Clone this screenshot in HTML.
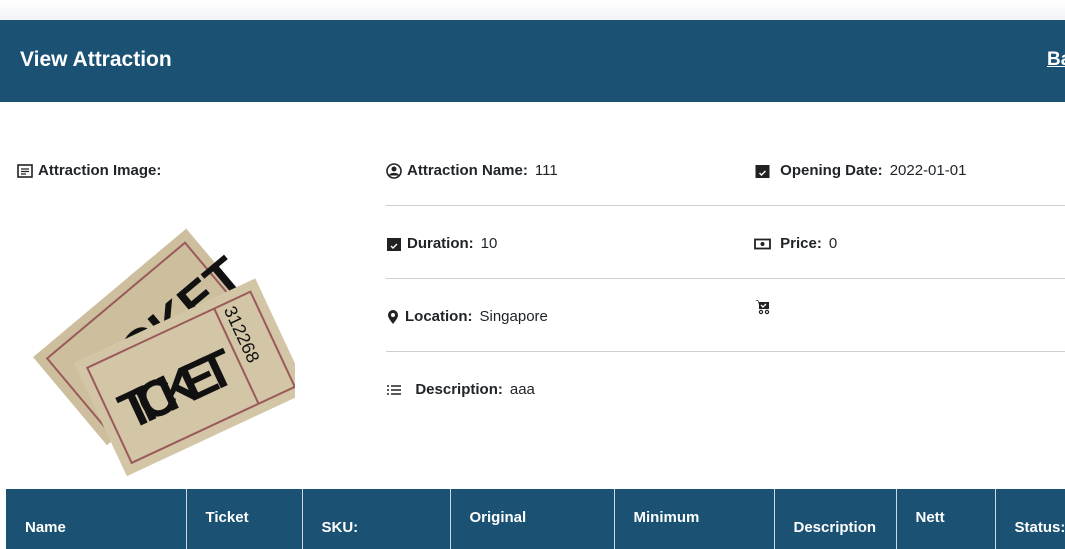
<!DOCTYPE html>
<html><head><meta charset="utf-8"><style>
body{margin:0;width:1065px;height:529px;overflow:hidden;background:#fff;font-family:"Liberation Sans",sans-serif;color:#212529;position:relative}
.top{position:absolute;left:0;top:0;width:1065px;height:20px;background:linear-gradient(#fff,#f1f3f6)}
.bar{position:absolute;left:0;top:20px;width:1065px;height:82px;background:#1b5274}
.bar h1{position:absolute;left:20px;top:28px;margin:0;font-size:21px;font-weight:bold;color:#fff}
.bar a{position:absolute;left:1047px;top:29px;color:#fff;font-size:19px;font-weight:bold;text-decoration:underline}
.f{position:absolute;font-size:15px;white-space:nowrap;display:flex;align-items:center}
.f b{margin-right:7px}
.f svg{margin-right:5px}
.hr{position:absolute;left:386px;width:679px;height:1px;background:#cfcfcf}
table{position:absolute;left:6px;top:489px;border-collapse:collapse;table-layout:fixed;background:#1b5274;color:#fff;font-weight:bold;font-size:15px;width:1100px}
td{border-left:1px solid #cfd8e0;height:60px;vertical-align:top;padding:0 0 0 19px;box-sizing:border-box;overflow:hidden;white-space:nowrap}
</style></head><body>
<div class="top"></div>
<div class="bar"><h1>View Attraction</h1><a>Ba</a></div>

<div class="f" style="left:17px;top:162px"><svg width="16" height="14" viewBox="0 0 16 14"><rect x="1" y="1" width="14" height="12" fill="none" stroke="#222" stroke-width="1.6"/><path d="M4 5h8M4 7.5h8M4 10h5" stroke="#222" stroke-width="1.3"/></svg><b>Attraction Image:</b></div>

<svg style="position:absolute;left:30px;top:195px" width="265" height="285" viewBox="0 0 265 285">
<g transform="rotate(-40 115 140)"><rect x="15" y="85" width="200" height="115" fill="#cdbf9e"/><rect x="25" y="95" width="180" height="95" fill="none" stroke="#9a5a5a" stroke-width="2"/><text x="40" y="165" font-size="52" font-weight="bold" fill="#111" font-family="Liberation Sans Narrow,Liberation Sans,sans-serif">TICKET</text></g>
<g transform="rotate(-25 160 180)"><rect x="60" y="120" width="200" height="125" fill="#d3c6a6"/><rect x="70" y="130" width="180" height="105" fill="none" stroke="#9a5a5a" stroke-width="2"/><line x1="210" y1="130" x2="210" y2="235" stroke="#9a5a5a" stroke-width="2"/><text x="82" y="205" font-size="52" font-weight="bold" fill="#111" font-family="Liberation Sans Narrow,Liberation Sans,sans-serif" textLength="120">TICKET</text><text x="0" y="0" font-size="18" fill="#111" transform="translate(218 135) rotate(90)">312268</text></g>
</svg>

<div class="f" style="left:386px;top:162px"><svg width="16" height="16" viewBox="0 0 16 16"><circle cx="8" cy="8" r="7" fill="none" stroke="#222" stroke-width="1.6"/><circle cx="8" cy="6" r="2.5" fill="#222"/><path d="M3.5 12.5c1.5-2.5 7.5-2.5 9 0" fill="#222" stroke="#222" stroke-width="1.5"/></svg><b>Attraction Name:</b>111</div>
<div class="f" style="left:754px;top:162px"><svg width="17" height="16" viewBox="0 0 16 16"><rect x="1" y="2" width="14" height="13" fill="#222"/><path d="M5 10l2 2 4-4" stroke="#fff" stroke-width="1.4" fill="none"/></svg>&nbsp;<b>Opening Date:</b>2022-01-01</div>
<div class="hr" style="top:205px"></div>
<div class="f" style="left:386px;top:235px"><svg width="16" height="16" viewBox="0 0 16 16"><rect x="1" y="2" width="14" height="13" fill="#222"/><path d="M5 10l2 2 4-4" stroke="#fff" stroke-width="1.4" fill="none"/></svg><b>Duration:</b>10</div>
<div class="f" style="left:754px;top:235px"><svg width="17" height="12" viewBox="0 0 17 12"><rect x="1" y="1.5" width="15" height="9" fill="none" stroke="#222" stroke-width="1.8"/><circle cx="8.5" cy="6" r="2" fill="#222"/></svg>&nbsp;<b>Price:</b>0</div>
<div class="hr" style="top:278px"></div>
<div class="f" style="left:386px;top:308px"><svg width="14" height="16" viewBox="0 0 14 16"><path d="M7 15C3 10 2 8 2 6a5 5 0 0110 0c0 2-1 4-5 9z" fill="#222"/><circle cx="7" cy="6" r="2" fill="#fff"/></svg><b>Location:</b>Singapore</div>
<svg style="position:absolute;left:755px;top:299px" width="16" height="16" viewBox="0 0 16 16"><path d="M0 1h3l1 2h10l-1 7H5L3 2" fill="#222"/><rect x="4" y="3" width="10" height="7" fill="#222"/><path d="M6 6l2 2 3-3" stroke="#fff" stroke-width="1.3" fill="none"/><circle cx="6" cy="13" r="1.6" fill="none" stroke="#222" stroke-width="1.2"/><circle cx="12" cy="13" r="1.6" fill="none" stroke="#222" stroke-width="1.2"/></svg>
<div class="hr" style="top:351px"></div>
<div class="f" style="left:386px;top:381px"><svg width="16" height="12" viewBox="0 0 16 12"><path d="M1 2h2M1 6h2M1 10h2M5 2h10M5 6h10M5 10h10" stroke="#222" stroke-width="1.4"/></svg>&nbsp;&nbsp;<b>Description:</b>aaa</div>

<table><colgroup><col style="width:180px"><col style="width:116px"><col style="width:148px"><col style="width:164px"><col style="width:160px"><col style="width:122px"><col style="width:99px"><col style="width:111px"></colgroup><tr>
<td style="border-left:0;padding-top:30px">Name</td>
<td style="padding-top:20px">Ticket</td>
<td style="padding-top:30px">SKU:</td>
<td style="padding-top:20px">Original</td>
<td style="padding-top:20px">Minimum</td>
<td style="padding-top:30px">Description</td>
<td style="padding-top:20px">Nett</td>
<td style="padding-top:30px">Status:</td>
</tr></table>
</body></html>
